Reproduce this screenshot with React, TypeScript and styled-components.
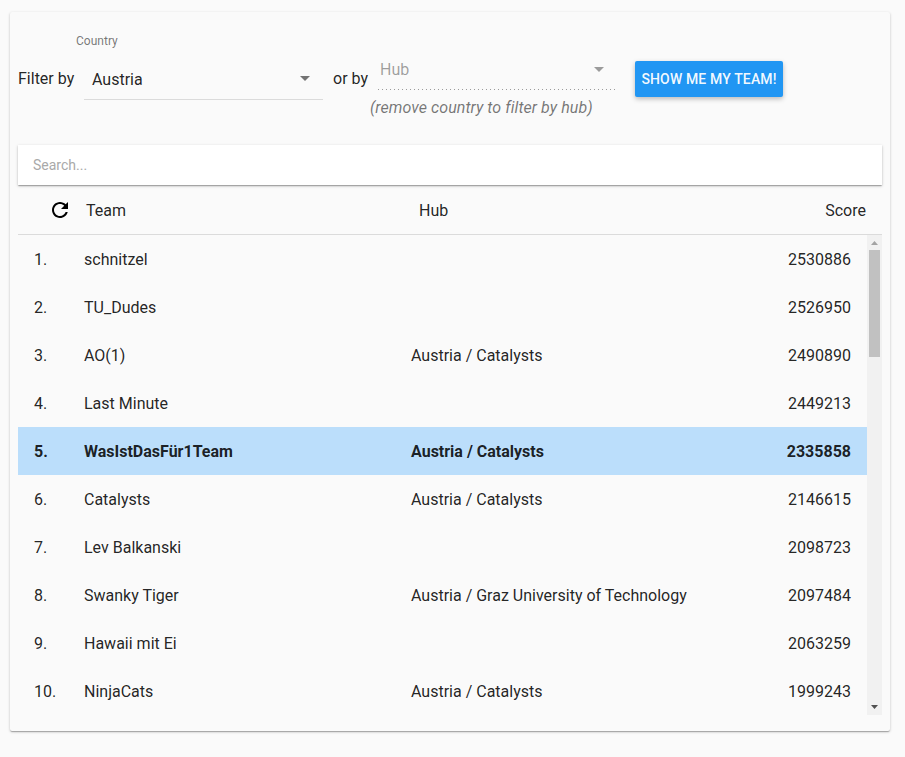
import React from 'react';
import styled, { createGlobalStyle, css } from 'styled-components';

const GlobalStyle = createGlobalStyle`
  * { box-sizing: border-box; }
  html, body { margin: 0; background: #fafafa; }
  body {
    color: rgba(0, 0, 0, 0.87);
    font: 400 16px/20px Roboto, sans-serif;
  }
`;

const Page = styled.div`
  display: flow-root;
  height: 757px;
  overflow: hidden;
`;

const Card = styled.main`
  width: 880px;
  height: 719px;
  margin: 12px 0 0 10px;
  padding: 8px;
  display: flex;
  flex-direction: column;
  background: #fafafa;
  border-radius: 2px;
  box-shadow: 0 1px 3px 0 rgba(0, 0, 0, 0.2), 0 1px 1px 0 rgba(0, 0, 0, 0.14),
    0 2px 1px -1px rgba(0, 0, 0, 0.12);
`;

const Filters = styled.section`
  display: flex;
  align-items: flex-start;
  height: 125px;
  flex: none;
`;

const FilterText = styled.span<{ $width: number; $gap?: number }>`
  width: ${(p) => p.$width}px;
  flex: none;
  margin: 49px 0 0 ${(p) => p.$gap ?? 0}px;
  white-space: nowrap;
`;

const CountryField = styled.div`
  width: 239px;
  flex: none;
  padding-top: 13px;
`;

const FieldLabel = styled.label`
  display: block;
  margin-left: -8px;
  font-size: 12px;
  line-height: 16px;
  letter-spacing: 0.02px;
  color: rgba(0, 0, 0, 0.54);
`;

const SelectValue = styled.div<{ $disabled?: boolean }>`
  display: flex;
  align-items: center;
  justify-content: space-between;
  ${(p) =>
    p.$disabled
      ? css`
          height: 41px;
          padding: 0 11px 0 2px;
          color: rgba(0, 0, 0, 0.38);
          background: linear-gradient(
              to right,
              rgba(0, 0, 0, 0.38) 0%,
              rgba(0, 0, 0, 0.38) 33%,
              transparent 0%
            )
            0 100% / 4px 1px repeat-x;
        `
      : css`
          height: 42px;
          margin-top: 9px;
          padding: 3px 13px 0 8px;
          border-bottom: 1px solid rgba(0, 0, 0, 0.12);
        `}
`;

const Caret = styled.i<{ $disabled?: boolean }>`
  width: 0;
  height: 0;
  border: solid transparent;
  border-width: 5px 5px 0;
  border-top-color: ${(p) => (p.$disabled ? 'rgba(0,0,0,.38)' : 'rgba(0,0,0,.54)')};
  margin-top: ${(p) => (p.$disabled ? 0 : -4)}px;
`;

const HubField = styled.div`
  width: 237px;
  flex: none;
  margin-left: 10px;
  padding-top: 29px;
`;

const Hint = styled.em`
  display: block;
  margin: 8px 0 0 -8px;
  color: rgba(0, 0, 0, 0.54);
  letter-spacing: 0.06px;
  white-space: nowrap;
`;

const TeamButton = styled.button`
  height: 36px;
  width: 148px;
  flex: none;
  margin: 41px 0 0 20px;
  padding: 0;
  border: 0;
  border-radius: 2px;
  background: #2196f3;
  color: rgba(255, 255, 255, 0.96);
  font: 500 14px/36px Roboto, sans-serif;
  letter-spacing: 0.01em;
  text-transform: uppercase;
  white-space: nowrap;
  box-shadow: 0 2px 5px 0 rgba(0, 0, 0, 0.26);
`;

const Search = styled.input`
  width: 100%;
  height: 40px;
  flex: none;
  padding: 0 15px;
  border: 0;
  outline: 0;
  background: #fff;
  font: 400 14px Roboto, sans-serif;
  box-shadow: 0 1px 3px 0 rgba(0, 0, 0, 0.2), 0 1px 1px 0 rgba(0, 0, 0, 0.14),
    0 2px 1px -1px rgba(0, 0, 0, 0.12);
  &::placeholder { color: #a9a9a9; }
`;

const TableHead = styled.header`
  display: grid;
  grid-template-columns: 68px 333px 1fr auto;
  align-items: center;
  height: 50px;
  flex: none;
  padding-right: 16px;
  border-bottom: 1px solid rgba(0, 0, 0, 0.12);
`;

const HeadCell = styled.span`
  padding-top: 2px;
`;

const RefreshIcon = styled.svg`
  width: 24px;
  height: 24px;
  margin-left: 30px;
  fill: #000;
`;

const TableBody = styled.section`
  display: flex;
  height: 480px;
  flex: none;
`;

const Rows = styled.div`
  flex: 1;
`;

const Row = styled.div<{ $own?: boolean }>`
  display: grid;
  grid-template-columns: 50px 327px 1fr auto;
  align-items: center;
  height: 48px;
  padding: 1px 16px 0;
  background: ${(p) => (p.$own ? '#bbdefb' : '#fafafa')};
  font-weight: ${(p) => (p.$own ? 700 : 400)};
`;

const Scrollbar = styled.div`
  display: flex;
  flex-direction: column;
  align-items: center;
  width: 15px;
  background: #f1f1f1;
`;

const Thumb = styled.div`
  width: 11px;
  height: 107px;
  margin-bottom: auto;
  background: #c1c1c1;
`;

const ScrollArrow = styled.svg`
  width: 15px;
  height: 15px;
  flex: none;
`;

const teams = [
  ['schnitzel', '', '2530886'],
  ['TU_Dudes', '', '2526950'],
  ['AO(1)', 'Austria / Catalysts', '2490890'],
  ['Last Minute', '', '2449213'],
  ['WasIstDasFür1Team', 'Austria / Catalysts', '2335858'],
  ['Catalysts', 'Austria / Catalysts', '2146615'],
  ['Lev Balkanski', '', '2098723'],
  ['Swanky Tiger', 'Austria / Graz University of Technology', '2097484'],
  ['Hawaii mit Ei', '', '2063259'],
  ['NinjaCats', 'Austria / Catalysts', '1999243'],
];

const ownTeam = 'WasIstDasFür1Team';

export default function App() {
  return (
    <Page>
      <GlobalStyle />
      <Card>
        <Filters>
          <FilterText $width={66}>Filter by</FilterText>
          <CountryField>
            <FieldLabel>Country</FieldLabel>
            <SelectValue>
              Austria
              <Caret />
            </SelectValue>
          </CountryField>
          <FilterText $width={35} $gap={10}>or by</FilterText>
          <HubField>
            <SelectValue $disabled>
              Hub
              <Caret $disabled />
            </SelectValue>
            <Hint>(remove country to filter by hub)</Hint>
          </HubField>
          <TeamButton>Show me my team!</TeamButton>
        </Filters>
        <Search placeholder="Search..." />
        <TableHead>
          <RefreshIcon viewBox="0 0 24 24">
            <path d="M17.65 6.35C16.2 4.9 14.21 4 12 4c-4.42 0-7.99 3.58-7.99 8s3.57 8 7.99 8c3.73 0 6.84-2.55 7.73-6h-2.08c-.82 2.33-3.04 4-5.65 4-3.31 0-6-2.69-6-6s2.69-6 6-6c1.66 0 3.14.69 4.22 1.78L13 11h7V4l-2.35 2.35z" />
          </RefreshIcon>
          <HeadCell>Team</HeadCell>
          <HeadCell>Hub</HeadCell>
          <HeadCell>Score</HeadCell>
        </TableHead>
        <TableBody>
          <Rows>
            {teams.map(([name, hub, score], i) => (
              <Row key={name} $own={name === ownTeam}>
                <span>{i + 1}.</span>
                <span>{name}</span>
                <span>{hub}</span>
                <span>{score}</span>
              </Row>
            ))}
          </Rows>
          <Scrollbar>
            <ScrollArrow viewBox="0 0 15 15">
              <path d="M4 10h7L7.5 6z" fill="#a3a3a3" />
            </ScrollArrow>
            <Thumb />
            <ScrollArrow viewBox="0 0 15 15">
              <path d="M4 5h7L7.5 9z" fill="#505050" />
            </ScrollArrow>
          </Scrollbar>
        </TableBody>
      </Card>
    </Page>
  );
}
